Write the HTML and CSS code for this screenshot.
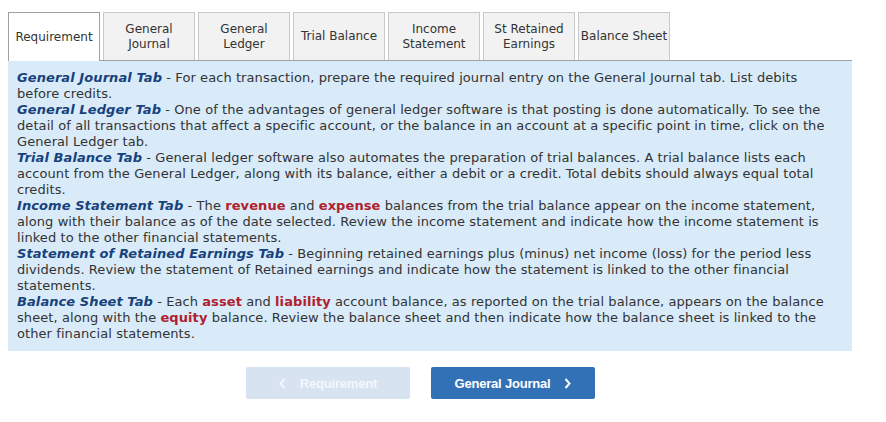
FILE: index.html
```html
<!DOCTYPE html>
<html lang="en">
  <head>
    <meta charset="UTF-8" />
    <title>Requirement</title>
    <link rel="stylesheet" href="styles.css">
  </head>
  <body>
    <div class="wrap">
      <!-- Tab strip -->
      <div class="tabs">
        <div class="tab active">Requirement</div>
        <div class="tab">General<br>Journal</div>
        <div class="tab">General<br>Ledger</div>
        <div class="tab">Trial Balance</div>
        <div class="tab">Income<br>Statement</div>
        <div class="tab">St Retained<br>Earnings</div>
        <div class="tab">Balance Sheet</div>
      </div>

      <!-- Instructions panel -->
      <div class="panel">
        <p><b class="title">General Journal Tab</b> - For each transaction, prepare the required journal entry on the General Journal tab. List debits before credits.</p>
        <p><b class="title">General Ledger Tab</b> - One of the advantages of general ledger software is that posting is done automatically. To see the detail of all transactions that affect a specific account, or the balance in an account at a specific point in time, click on the General Ledger tab.</p>
        <p><b class="title">Trial Balance Tab</b> - General ledger software also automates the preparation of trial balances. A trial balance lists each account from the General Ledger, along with its balance, either a debit or a credit. Total debits should always equal total credits.</p>
        <p><b class="title">Income Statement Tab</b> - The <b class="hl">revenue</b> and <b class="hl">expense</b> balances from the trial balance appear on the income statement, along with their balance as of the date selected. Review the income statement and indicate how the income statement is linked to the other financial statements.</p>
        <p><b class="title">Statement of Retained Earnings Tab</b> - Beginning retained earnings plus (minus) net income (loss) for the period less dividends. Review the statement of Retained earnings and indicate how the statement is linked to the other financial statements.</p>
        <p><b class="title">Balance Sheet Tab</b> - Each <b class="hl">asset</b> and <b class="hl">liability</b> account balance, as reported on the trial balance, appears on the balance sheet, along with the <b class="hl">equity</b> balance. Review the balance sheet and then indicate how the balance sheet is linked to the other financial statements.</p>
      </div>

      <!-- Navigation buttons -->
      <div class="nav">
        <button class="btn disabled">
          <svg class="chev" width="7" height="11" viewBox="0 0 7 11"><polyline points="5.5,1 1.5,5.5 5.5,10" fill="none" stroke="currentColor" stroke-width="2"/></svg>
          Requirement
        </button>
        <button class="btn">
          General Journal
          <svg class="chev" width="7" height="11" viewBox="0 0 7 11"><polyline points="1.5,1 5.5,5.5 1.5,10" fill="none" stroke="currentColor" stroke-width="2"/></svg>
        </button>
      </div>
    </div>
  </body>
</html>
```

FILE: styles.css
```css
/* Page base */
body {
  margin: 0;
  background: #fff;
  font-family: Verdana, "DejaVu Sans", sans-serif;
  color: #333;
}

.wrap {
  padding: 12px 34px 0 8px;
}

/* Tab strip */
.tabs {
  display: flex;
  gap: 3px;
}

.tab {
  width: 90px;
  height: 47px;
  border: 1px solid #c8c8c8;
  border-bottom: none;
  background: #f2f2f2;
  font-size: 12px;
  line-height: 15px;
  text-align: center;
  display: flex;
  align-items: center;
  justify-content: center;
}

.tab.active {
  background: #fff;
  border-color: #a0a0a0;
  height: 48px;
  margin-bottom: -1px;
  position: relative;
}

/* Instructions panel */
.panel {
  background: #d9ebf9;
  border-top: 1px solid #a0a0a0;
  padding: 9px 9px 9px 9px;
  font-size: 13px;
  line-height: 16px;
  letter-spacing: 0.08px;
}

.panel p {
  margin: 0;
}

.title {
  color: #17427c;
  font-style: italic;
}

.hl {
  color: #b1202d;
}

/* Navigation buttons */
.nav {
  display: flex;
  gap: 21px;
  padding: 16px 0 0 238px;
}

.btn {
  width: 164px;
  height: 32px;
  border: none;
  border-radius: 2px;
  background: #3371b7;
  color: #fff;
  font-family: Arial, "Liberation Sans", sans-serif;
  font-weight: bold;
  font-size: 13px;
  letter-spacing: -0.2px;
  display: flex;
  align-items: center;
  justify-content: center;
  gap: 14px;
}

.btn.disabled {
  background: #d7e3f1;
  color: #f4f7fb;
}
```
